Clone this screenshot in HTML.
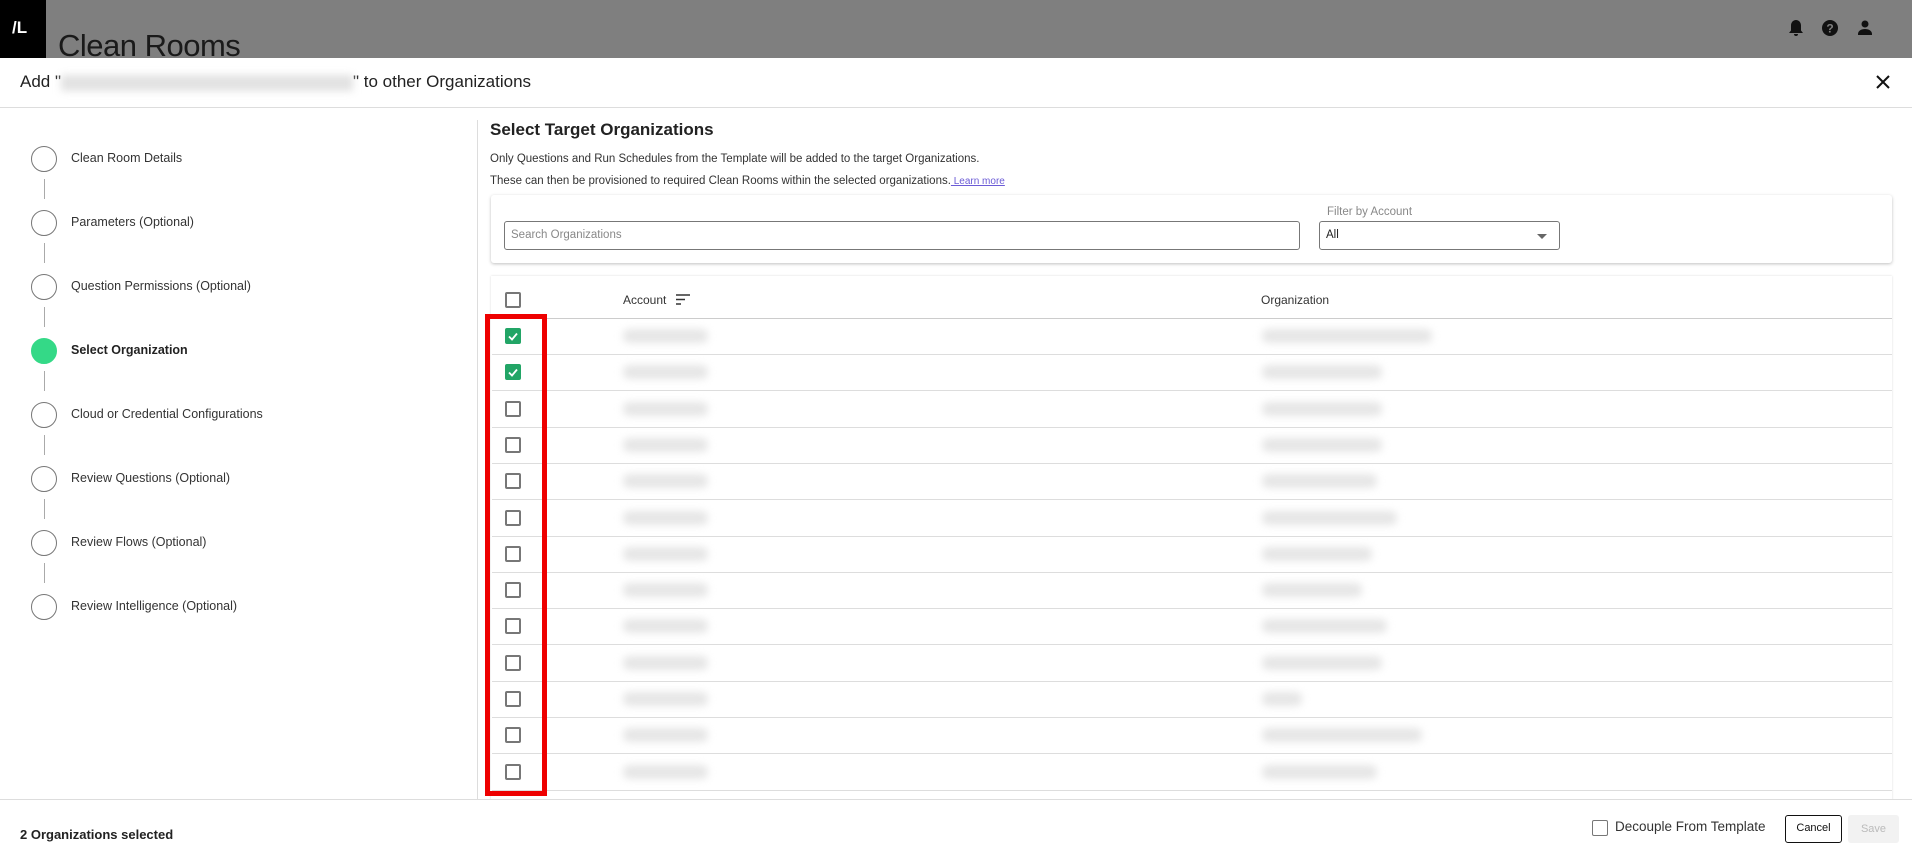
<!DOCTYPE html>
<html><head><meta charset="utf-8">
<style>
*{box-sizing:border-box;margin:0;padding:0}
body{width:1912px;height:857px;position:relative;overflow:hidden;background:#fff;font-family:"Liberation Sans",sans-serif;color:#222}
.a{position:absolute}
.hdr{left:0;top:0;width:1912px;height:58px;background:#7f7f7f}
.logo{left:0;top:0;width:46px;height:58px;background:#000;color:#fff;font-weight:bold;font-size:17px;padding:18px 0 0 12px}
.title{left:58px;top:26px;font-size:31px;color:#1a1a1a;line-height:40px;height:32px;overflow:hidden;letter-spacing:-0.5px}
.modal{left:0;top:58px;width:1912px;height:799px;background:#fff}
.step{position:absolute;left:31px;width:26px;height:26px;border:1.3px solid #777;border-radius:50%}
.slab{position:absolute;left:71px;font-size:12.5px;color:#333}
.conn{position:absolute;left:44px;width:1px;height:20px;background:#aaa}
.cb{position:absolute;width:16px;height:16px;border:2px solid #777;border-radius:2px;background:#fff}
.cb.on{background:#22a566;border-color:#22a566}
.row{position:absolute;left:492px;width:1400px;height:1px;background:#ddd}
.blur{position:absolute;height:14px;background:#e6e6e6;filter:blur(4px);border-radius:6px}
</style></head><body>
<div class="a hdr"></div>
<div class="a logo">/L</div>
<div class="a title">Clean Rooms</div>
<svg class="a" style="left:1786px;top:18px" width="92" height="20" viewBox="0 0 92 20">
<path d="M10 2c-3 0-5 2.5-5 5.5v5L3 15h14l-2-2.5v-5C15 4.5 13 2 10 2z M8 16h4a2 2 0 0 1-4 0z" fill="#111"/>
<circle cx="44" cy="10" r="8" fill="#111"/>
<text x="44" y="14.5" font-size="12" font-weight="bold" fill="#7f7f7f" text-anchor="middle" font-family="Liberation Sans">?</text>
<circle cx="79" cy="6" r="3.5" fill="#111"/><path d="M72 16c0-3 3-5 7-5s7 2 7 5v1H72z" fill="#111"/>
</svg>
<div class="a modal"></div>
<div class="a" style="left:20px;top:72px;font-size:17px;color:#222">Add "<span style="display:inline-block;width:292px;height:16px;background:#e2e2e2;filter:blur(4px);vertical-align:middle"></span>" to other Organizations</div>
<svg class="a" style="left:1875px;top:74px" width="16" height="16"><path d="M2 2L14 14M14 2L2 14" stroke="#111" stroke-width="2"/></svg>
<div class="a" style="left:0;top:107px;width:1912px;height:1px;background:#ddd"></div>

<div class="step" style="top:146px"></div><div class="slab" style="top:151px">Clean Room Details</div>
<div class="conn" style="top:179px"></div>
<div class="step" style="top:210px"></div><div class="slab" style="top:215px">Parameters (Optional)</div>
<div class="conn" style="top:243px"></div>
<div class="step" style="top:274px"></div><div class="slab" style="top:279px">Question Permissions (Optional)</div>
<div class="conn" style="top:307px"></div>
<div class="step" style="top:338px;background:#34d987;border-color:#34d987"></div><div class="slab" style="top:343px;font-weight:bold;color:#222">Select Organization</div>
<div class="conn" style="top:371px"></div>
<div class="step" style="top:402px"></div><div class="slab" style="top:407px">Cloud or Credential Configurations</div>
<div class="conn" style="top:435px"></div>
<div class="step" style="top:466px"></div><div class="slab" style="top:471px">Review Questions (Optional)</div>
<div class="conn" style="top:499px"></div>
<div class="step" style="top:530px"></div><div class="slab" style="top:535px">Review Flows (Optional)</div>
<div class="conn" style="top:563px"></div>
<div class="step" style="top:594px"></div><div class="slab" style="top:599px">Review Intelligence (Optional)</div>

<div class="a" style="left:477px;top:120px;width:1px;height:680px;background:#ddd"></div>
<div class="a" style="left:490px;top:120px;font-size:17px;font-weight:bold;color:#222">Select Target Organizations</div>
<div class="a" style="left:490px;top:153px;font-size:11.5px;color:#333">Only Questions and Run Schedules from the Template will be added to the target Organizations.</div>
<div class="a" style="left:490px;top:175px;font-size:11.5px;color:#333">These can then be provisioned to required Clean Rooms within the selected organizations.<span style="color:#6b5bd6;text-decoration:underline;font-size:10px"> Learn more</span></div>

<div class="a" style="left:491px;top:195px;width:1401px;height:68px;background:#fff;box-shadow:0 1px 3px rgba(0,0,0,.25);border-radius:3px"></div>
<div class="a" style="left:504px;top:221px;width:796px;height:29px;border:1px solid #777;border-radius:3px;font-size:11.5px;color:#888;padding:7px 6px">Search Organizations</div>
<div class="a" style="left:1327px;top:206px;font-size:11.5px;color:#888">Filter by Account</div>
<div class="a" style="left:1319px;top:221px;width:241px;height:29px;border:1px solid #777;border-radius:3px;font-size:11.5px;color:#222;padding:7px 6px">All<span style="position:absolute;right:12px;top:12px;border-left:5px solid transparent;border-right:5px solid transparent;border-top:5px solid #666"></span></div>

<div class="a" style="left:491px;top:276px;width:1401px;height:530px;background:#fff;box-shadow:0 0 2px rgba(0,0,0,.15)"></div>
<div class="cb" style="left:505px;top:292px"></div>
<div class="a" style="left:623px;top:293px;font-size:12px;color:#333">Account</div>
<svg class="a" style="left:676px;top:294px" width="14" height="12"><path d="M0 1h14M0 5.5h9M0 10h5" stroke="#333" stroke-width="1.6"/></svg>
<div class="a" style="left:1261px;top:293px;font-size:12px;color:#333">Organization</div>
<div class="row" style="top:318px;background:#ccc"></div>

<div id="rows"></div>
<script>
var widths=[170,120,120,120,115,135,110,100,125,120,40,160,115];
var h='';
for(var i=0;i<13;i++){
 var y=318+i*36.3;
 var on=i<2;
 h+='<div class="cb'+(on?' on':'')+'" style="left:505px;top:'+(y+10)+'px">'+(on?'<svg width="12" height="12" style="position:absolute;left:0;top:0"><path d="M2 6.5l3 3 5-6" stroke="#fff" stroke-width="1.8" fill="none"/></svg>':'')+'</div>';
 h+='<div class="blur" style="left:623px;top:'+(y+11)+'px;width:85px"></div>';
 h+='<div class="blur" style="left:1262px;top:'+(y+11)+'px;width:'+widths[i]+'px"></div>';
 h+='<div class="row" style="top:'+(y+36)+'px"></div>';
}
document.getElementById('rows').innerHTML=h;
</script>
<div class="a" style="left:485px;top:314px;width:62px;height:482px;border:5px solid #e00"></div>

<div class="a" style="left:0;top:799px;width:1912px;height:58px;background:#fff;border-top:1px solid #ddd"></div>
<div class="a" style="left:20px;top:827px;font-size:13px;font-weight:bold;color:#222">2 Organizations selected</div>
<div class="cb" style="left:1592px;top:820px;border-width:1.5px"></div>
<div class="a" style="left:1615px;top:819px;font-size:13.5px;color:#333">Decouple From Template</div>
<div class="a" style="left:1785px;top:815px;width:57px;height:28px;border:1.5px solid #111;border-radius:3px;font-size:11px;text-align:center;line-height:25px;color:#111">Cancel</div>
<div class="a" style="left:1848px;top:815px;width:51px;height:28px;background:#f2f2f2;border-radius:3px;font-size:11px;text-align:center;line-height:28px;color:#bbb">Save</div>
</body></html>
